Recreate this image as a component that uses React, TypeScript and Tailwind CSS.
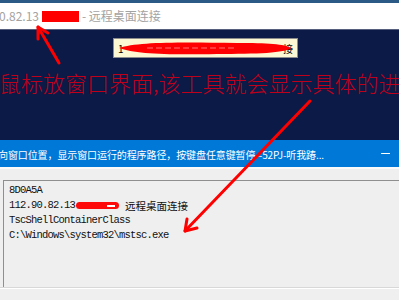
const cjk = '"Noto Sans CJK SC", "Noto Sans", sans-serif';
const mono = '"Liberation Mono", "Noto Sans CJK SC", monospace';

const infoLines = ['8D0A5A', null, 'TscShellContainerClass', 'C:\\Windows\\system32\\mstsc.exe'];

function RedMark({ className }: { className: string }) {
  return (
    <span className={`relative inline-block rounded-sm bg-[#ff0a0a] ${className}`}>
      <span className="absolute right-[4px] top-1/2 h-[2px] w-[8px] -translate-y-1/2 bg-white" />
    </span>
  );
}

function Arrows() {
  return (
    <svg
      className="pointer-events-none absolute inset-0"
      width={399}
      height={300}
      viewBox="0 0 399 300"
    >
      <g stroke="#ff0000" strokeWidth={3} strokeLinecap="round" fill="none">
        <path d="M59 63 L38 27" />
        <path d="M38 39 L38 27 L48 33" strokeLinejoin="round" />
        <path d="M310 101 L185 231" />
        <path d="M197 228 L185 231 L187 219" strokeLinejoin="round" />
      </g>
    </svg>
  );
}

export default function App() {
  return (
    <div
      className="relative h-[300px] w-[399px] overflow-hidden bg-[#efefef]"
      style={{ fontFamily: cjk }}
    >
      <div className="h-[3px] bg-[#2c5a86]" />

      <div className="flex h-[26px] items-center gap-[3px] bg-white text-[12px] text-[#a3a3a3]">
        <span className="-ml-[1px]">0.82.13</span>
        <span className="h-[11px] w-[37px] bg-[#ff0000]" />
        <span>- 远程桌面连接</span>
      </div>
      <div className="h-px bg-[#56607e]" />

      <div className="flex h-[110px] flex-col bg-[#0b1a47]">
        <div className="relative ml-[113px] mt-[8px] flex h-[20px] w-[185px] items-center justify-between border border-[#8c8c8c] bg-[#fdf8d4] px-[4px] text-[10px] text-black">
          <span>1</span>
          <span>接</span>
          <svg className="absolute left-[3px] top-[2px]" width={176} height={15} viewBox="0 0 176 15">
            <path
              d="M2 7 C20 1 60 1 120 2 C150 2 168 3 174 7 C168 12 140 13 100 13 C50 14 18 13 2 7 Z"
              fill="#ff0000"
            />
            <path d="M30 7 L120 7" stroke="#ffc0c0" strokeWidth={0.6} strokeDasharray="6 3" />
          </svg>
        </div>
        <div className="-ml-[1px] mt-[12px] whitespace-nowrap text-[22px] leading-[24px] font-light text-[#c0001a]">
          鼠标放窗口界面,该工具就会显示具体的进
        </div>
      </div>

      <div className="flex h-[27px] items-center justify-between bg-[#0078d7] text-[10px] text-white">
        <span className="-ml-[2px] whitespace-nowrap pt-[2px] tracking-[-0.1px]">
          向窗口位置，显示窗口运行的程序路径，按键盘任意键暂停--52PJ-听我踳...
        </span>
        <span className="mr-[9px] h-px w-[9px] shrink-0 bg-white" />
      </div>
      <div className="h-[2px] bg-[#fafafa]" />

      <div
        className="ml-[3px] mt-[11px] h-[107px] border-t border-l border-[#8f8f8f] pl-[5px] pt-[2px] text-[10.5px] leading-[15px] tracking-[-0.8px] text-[#111]"
        style={{ fontFamily: mono }}
      >
        {infoLines.map((line, i) =>
          line === null ? (
            <div key={i} className="flex items-center whitespace-nowrap">
              <span>112.90.82.13</span>
              <RedMark className="ml-[1px] h-[7px] w-[43px]" />
              <span className="ml-[6px] tracking-normal" style={{ fontFamily: cjk }}>
                远程桌面连接
              </span>
            </div>
          ) : (
            <div key={i} className="whitespace-nowrap">
              {line}
            </div>
          ),
        )}
      </div>
      <div className="border-t border-[#d8d8d8]">
        <div className="h-px bg-white" />
      </div>

      <Arrows />
    </div>
  );
}
